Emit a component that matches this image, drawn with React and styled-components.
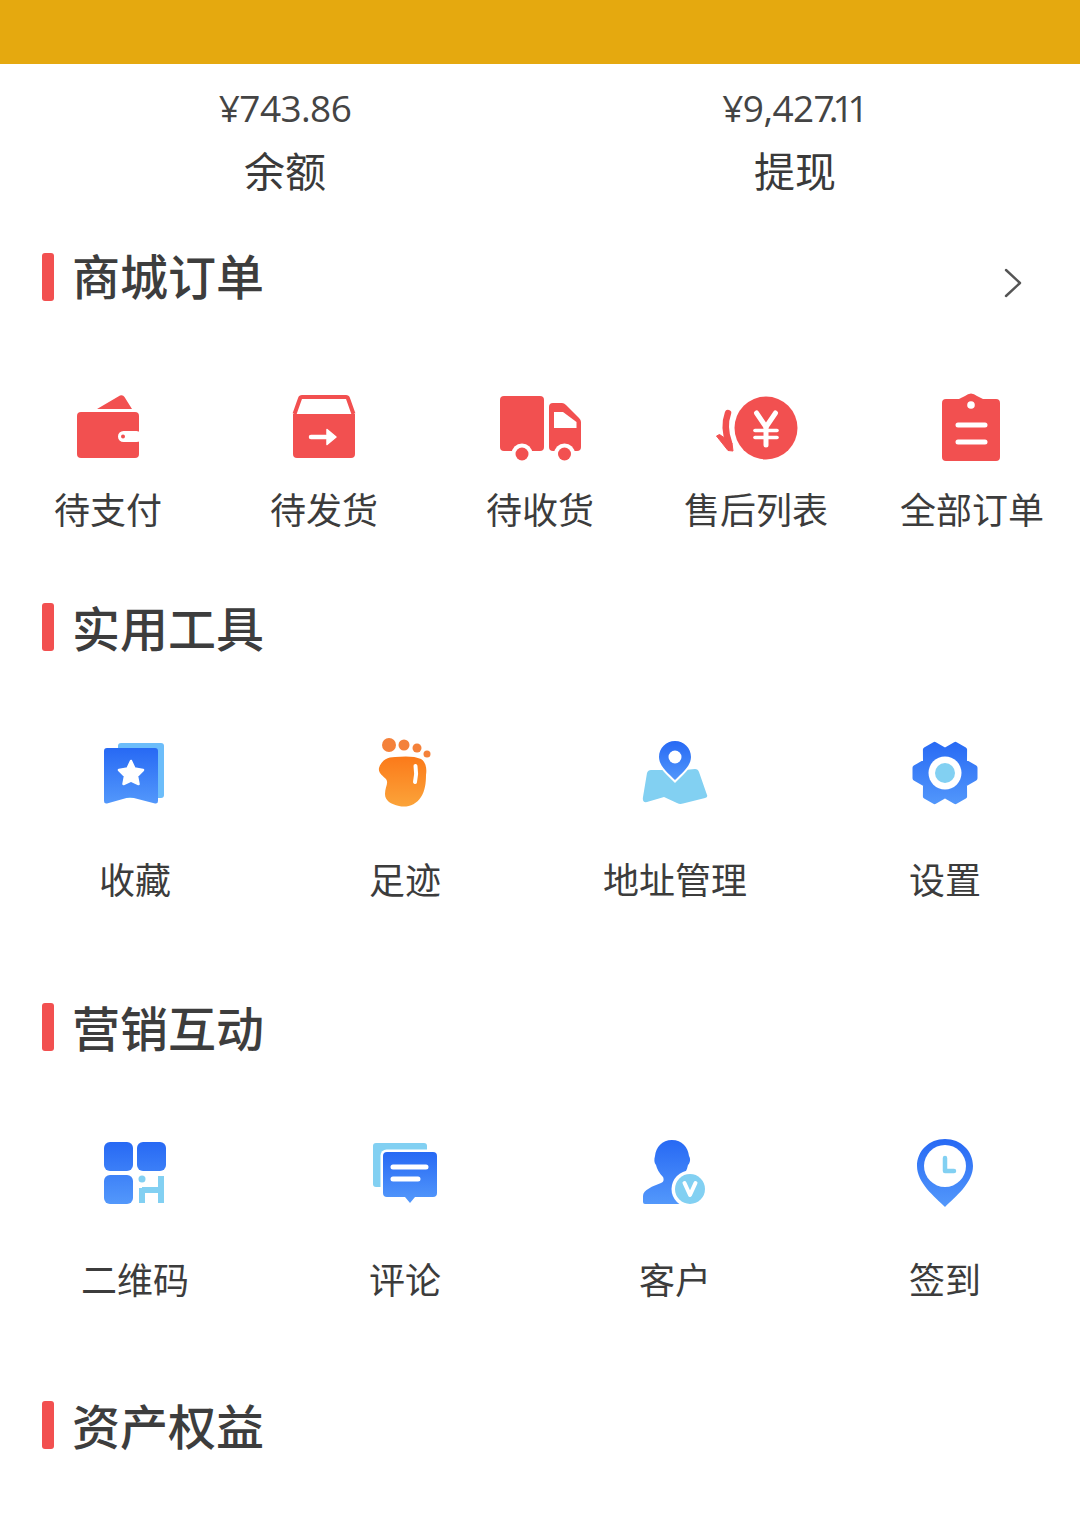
import React from 'react';
import styled, {createGlobalStyle} from 'styled-components';

const RED = '#f25050';
const SKY = '#82d0f2';

const GlobalStyle = createGlobalStyle`
  html, body {
    margin: 0;
    padding: 0;
    background: #fff;
  }
  body {
    font-family: "Noto Sans CJK SC", "Noto Sans", sans-serif;
    color: #333;
  }
`;

const Page = styled.div`
  width: 1080px;
  height: 1538px;
  overflow: hidden;
`;

const Band = styled.div`
  height: 64px;
  background: #e5a90f;
`;

const Stats = styled.div`
  display: grid;
  grid-template-columns: 510px 510px;
  padding: 20px 30px 0;
`;

const Stat = styled.div`
  display: flex;
  flex-direction: column;
  align-items: center;
`;

const StatValue = styled.div`
  font-family: "Open Sans", "Noto Sans CJK SC", sans-serif;
  font-size: 37px;
  font-weight: 400;
  line-height: 48px;
  letter-spacing: -0.6px;
  color: #444;
`;

const TightDigits = styled.span`
  letter-spacing: -6px;
  margin-right: 5px;
`;

const StatLabel = styled.div`
  margin-top: 9px;
  font-size: 41px;
  line-height: 56px;
  color: #3a3a3a;
`;

const SectionHead = styled.div`
  display: flex;
  align-items: center;
  justify-content: space-between;
  height: 48px;
  margin-top: ${p => p.$top}px;
  padding: 0 58px 0 42px;
`;

const SectionTitle = styled.div`
  display: flex;
  align-items: center;
  gap: 18px;
  font-size: 48px;
  font-weight: 500;
  line-height: 48px;
  color: #3d3d3d;

  &::before {
    content: '';
    width: 12px;
    height: 48px;
    border-radius: 3px;
    background: ${RED};
  }
`;

const TitleText = styled.span`
  padding-bottom: ${p => p.$lift}px;
`;

const Chevron = styled.svg`
  width: 18px;
  height: 30px;
  margin-top: 12px;
  fill: none;
  stroke: #555;
  stroke-width: 2.4;
  stroke-linecap: round;
  stroke-linejoin: round;
`;

const Grid = styled.div`
  display: grid;
  grid-template-columns: repeat(${p => p.$cols}, 1fr);
  margin-top: ${p => p.$top}px;
`;

const Item = styled.div`
  display: flex;
  flex-direction: column;
  align-items: center;
`;

const IconBox = styled.svg`
  display: block;
  width: 72px;
  height: 72px;
  overflow: visible;
  filter: blur(0.5px);
`;

const ItemLabel = styled.div`
  margin-top: ${p => p.$gap}px;
  font-size: 36px;
  line-height: 48px;
  color: #3c3c3c;
  white-space: nowrap;
`;

const Blue = ({id, y1 = 0, y2 = 72}) => (
  <defs>
    <linearGradient id={id} gradientUnits="userSpaceOnUse" x1="0" x2="0" y1={y1} y2={y2}>
      <stop offset="0" stopColor="#2769f4" />
      <stop offset="1" stopColor="#5398fb" />
    </linearGradient>
  </defs>
);

const Wallet = () => (
  <IconBox viewBox="0 0 72 72">
    <path d="M25 18 L48 4.5 Q51 3.5 52.5 6 L60 18 Z" fill={RED} />
    <rect x="5" y="21" width="62" height="46" rx="4" fill={RED} />
    <rect x="46" y="40" width="24" height="11" rx="5.5" fill="#fff" />
    <rect x="67" y="38" width="4" height="15" fill="#fff" />
    <circle cx="51" cy="45.5" r="2" fill={RED} />
  </IconBox>
);

const ShipBox = () => (
  <IconBox viewBox="0 0 72 72">
    <path d="M6.5 23 L12 7.5 Q12.5 6 14 6 L58 6 Q59.5 6 60 7.5 L65.5 23" fill="none" stroke={RED} strokeWidth="4" />
    <path d="M5 23 H67 V63 Q67 67 63 67 H9 Q5 67 5 63 Z" fill={RED} />
    <path d="M23 46 H38" stroke="#fff" strokeWidth="4.5" strokeLinecap="round" />
    <path d="M39 38.5 L48 46 L39 53.5 Z" fill="#fff" stroke="#fff" strokeWidth="1.5" strokeLinejoin="round" />
  </IconBox>
);

const Truck = () => (
  <IconBox viewBox="0 0 72 72">
    <rect x="-4" y="5" width="44" height="55" rx="4" fill={RED} />
    <path d="M45 16 Q45 12 49 12 H58 Q60 12 62 14 L75 27 Q77 29 77 31 V56 Q77 60 73 60 H49 Q45 60 45 56 Z" fill={RED} />
    <path d="M50 21 H59 L72.5 31 V37 H50 Z" fill="#fff" />
    <circle cx="18" cy="63" r="10.5" fill="#fff" />
    <circle cx="60.5" cy="63" r="10.5" fill="#fff" />
    <circle cx="18" cy="63" r="6.5" fill={RED} />
    <circle cx="60.5" cy="63" r="6.5" fill={RED} />
  </IconBox>
);

const Refund = () => (
  <IconBox viewBox="0 0 72 72">
    <circle cx="46" cy="37" r="31.5" fill={RED} />
    <g fill="none" stroke="#fff" strokeWidth="5" strokeLinecap="round" strokeLinejoin="round">
      <path d="M36.5 22 L46 36 L55.5 22" />
      <path d="M35 39.5 H57" strokeWidth="3.6" />
      <path d="M35 46.5 H57" strokeWidth="3.6" />
      <path d="M46 37 V54" />
    </g>
    <path d="M8 22 Q3 36 9 52" fill="none" stroke={RED} strokeWidth="6.5" strokeLinecap="round" />
    <path d="M-3.5 45 L-0.5 43.5 L12 52 L13 60 L8 59.5 Z" fill={RED} stroke={RED} strokeWidth="1" strokeLinejoin="round" />
  </IconBox>
);

const Clipboard = () => (
  <IconBox viewBox="0 0 72 72">
    <path d="M10 8 H23 Q27 6 29 5 Q35 0 41 5 Q43 6 47 8 H60 Q64 8 64 12 V66 Q64 70 60 70 H10 Q6 70 6 66 V12 Q6 8 10 8 Z" fill={RED} />
    <circle cx="35" cy="14" r="3.8" fill="#fff" />
    <path d="M22 34 H49 M22 51 H49" stroke="#fff" strokeWidth="5" strokeLinecap="round" />
  </IconBox>
);

const Favorite = () => (
  <IconBox viewBox="0 0 72 72">
    <Blue id="fav" y1={11} y2={67} />
    <rect x="19" y="6" width="46" height="55" rx="3" fill="#6cbdfa" />
    <path d="M8 11 H56 Q59 11 59 14 V64 Q59 67 56 66.5 L31 60 L8 66.5 Q5 67 5 64 V14 Q5 11 8 11 Z" fill="url(#fav)" />
    <path d="M32 24 L35.5 31.5 L44 33 L38 39 L39.5 47 L32 43.5 L24.5 47 L26 39 L20 33 L28.5 31.5 Z" fill="#fff" stroke="#fff" strokeWidth="2.5" strokeLinejoin="round" />
  </IconBox>
);

const Foot = () => (
  <IconBox viewBox="0 0 72 72">
    <defs>
      <linearGradient id="foot" gradientUnits="userSpaceOnUse" x1="0" x2="0" y1="20" y2="70">
        <stop offset="0" stopColor="#fb7a1a" />
        <stop offset="1" stopColor="#fba43a" />
      </linearGradient>
    </defs>
    <circle cx="20" cy="8" r="7" fill="#f4813a" />
    <circle cx="35" cy="8" r="5.5" fill="#f4813a" />
    <circle cx="48" cy="11" r="4.5" fill="#f4813a" />
    <circle cx="58" cy="17" r="3.5" fill="#f4813a" />
    <path d="M10 31 C12 24 18 20 26 20 C36 19 46 19 52 22 C57 25 58 32 57 38 C57 46 56 54 52 60 C47 68 38 71 30 69 C22 67 16 64 16 57 C16 50 20 46 17 42 C14 39 9 36 10 31 Z" fill="url(#foot)" />
    <path d="M46.5 29 Q48 37 46 45" fill="none" stroke="#fff" strokeWidth="4" strokeLinecap="round" />
  </IconBox>
);

const MapPin = () => (
  <IconBox viewBox="0 0 72 72">
    <Blue id="pin" y1={4} y2={44} />
    <path d="M8 36 Q9 33 12 33 L27 33 L36 40 L46 33 L56 32 Q59 32 60 35 L68 58 Q69 60 66 61 L44 66.5 Q41 67.5 38 66 L25 60 L8 65 Q3 66 4 60 Z" fill={SKY} />
    <path d="M36 46 C28 38 18 30 18 20 C18 10 26 2 36 2 C46 2 54 10 54 20 C54 30 44 38 36 46 Z" fill="#fff" />
    <path d="M36 43 C29 36 20 29 20 20 C20 11 27 4 36 4 C45 4 52 11 52 20 C52 29 43 36 36 43 Z" fill="url(#pin)" />
    <circle cx="36" cy="20" r="6.5" fill="#fff" />
  </IconBox>
);

// six lobes, rounded off by the stroke
const gearPoints = (() => {
  const pts = [];
  for (let i = 0; i < 6; i++) {
    const a = i * 60;
    [[a - 10, 30.5], [a + 10, 30.5], [a + 30, 22.5]].forEach(([deg, r]) => {
      const t = (deg * Math.PI) / 180;
      pts.push(`${(36 + r * Math.cos(t)).toFixed(1)},${(36 + r * Math.sin(t)).toFixed(1)}`);
    });
  }
  return pts.join(' ');
})();

const Gear = () => (
  <IconBox viewBox="0 0 72 72">
    <Blue id="gear" y1={3} y2={69} />
    <polygon points={gearPoints} fill="url(#gear)" stroke="url(#gear)" strokeWidth="5" strokeLinejoin="round" />
    <circle cx="36" cy="36" r="16.5" fill="#fff" />
    <circle cx="36" cy="36" r="10" fill={SKY} />
  </IconBox>
);

const QrCode = () => (
  <IconBox viewBox="0 0 72 72">
    <Blue id="qr" y1={6} y2={68} />
    <rect x="5" y="6" width="29" height="29" rx="6" fill="url(#qr)" />
    <rect x="38" y="6" width="29" height="29" rx="6" fill="url(#qr)" />
    <rect x="5" y="39" width="29" height="29" rx="6" fill="url(#qr)" />
    <circle cx="43" cy="43" r="3.5" fill={SKY} />
    <path d="M43 52 V67 M62 40 V67 M43 54 H62" fill="none" stroke={SKY} strokeWidth="6" />
  </IconBox>
);

const Comment = () => (
  <IconBox viewBox="0 0 72 72">
    <Blue id="cmt" y1={16} y2={66} />
    <rect x="4" y="7" width="54" height="44" rx="3" fill={SKY} />
    <rect x="11.5" y="13.5" width="59" height="50" rx="6" fill="#fff" />
    <path d="M18 16 H64 Q68 16 68 20 V57 Q68 61 64 61 H46 L41 67 L36 61 H18 Q14 61 14 57 V20 Q14 16 18 16 Z" fill="url(#cmt)" />
    <path d="M24 31 H57 M24 43 H49" stroke="#fff" strokeWidth="5" strokeLinecap="round" />
  </IconBox>
);

const Customer = () => (
  <IconBox viewBox="0 0 72 72">
    <Blue id="cust" y1={4} y2={68} />
    <path d="M33 4 C43 4 49 11 50 20 C52 23 51 27 49 29 C48 34 46 38 43 41 C44 46 52 48 60 52 L60 68 H6 Q4 68 4 66 L4 60 C4 54 14 50 22 47 C25 46 25 43 24 41 C20 37 18 33 17 29 C15 27 15 23 16 20 C17 11 23 4 33 4 Z" fill="url(#cust)" />
    <circle cx="51" cy="53" r="18.5" fill="#fff" />
    <circle cx="51" cy="53" r="15" fill={SKY} />
    <path d="M45.5 47 L51 59 L56.5 47" fill="none" stroke="#fff" strokeWidth="4" strokeLinecap="round" strokeLinejoin="round" />
  </IconBox>
);

const CheckIn = () => (
  <IconBox viewBox="0 0 72 72">
    <Blue id="chk" y1={3} y2={71} />
    <path d="M36 71 C26 61 8 47 8 30 C8 15 20 3 36 3 C52 3 64 15 64 30 C64 47 46 61 36 71 Z" fill="url(#chk)" />
    <circle cx="36" cy="30" r="21" fill="#fff" />
    <path d="M36 22 V35 H45" fill="none" stroke={SKY} strokeWidth="4.5" strokeLinecap="round" strokeLinejoin="round" />
  </IconBox>
);

const orders = [
  {label: '待支付', Icon: Wallet},
  {label: '待发货', Icon: ShipBox},
  {label: '待收货', Icon: Truck},
  {label: '售后列表', Icon: Refund},
  {label: '全部订单', Icon: Clipboard}
];

const tools = [
  {label: '收藏', Icon: Favorite},
  {label: '足迹', Icon: Foot},
  {label: '地址管理', Icon: MapPin},
  {label: '设置', Icon: Gear}
];

const marketing = [
  {label: '二维码', Icon: QrCode},
  {label: '评论', Icon: Comment},
  {label: '客户', Icon: Customer},
  {label: '签到', Icon: CheckIn}
];

const IconGrid = ({items, cols, top, gap}) => (
  <Grid $cols={cols} $top={top}>
    {items.map(({label, Icon}) => (
      <Item key={label}>
        <Icon />
        <ItemLabel $gap={gap}>{label}</ItemLabel>
      </Item>
    ))}
  </Grid>
);

export default function App() {
  return (
    <Page>
      <GlobalStyle />
      <Band />
      <Stats>
        <Stat>
          <StatValue>¥743.86</StatValue>
          <StatLabel>余额</StatLabel>
        </Stat>
        <Stat>
          <StatValue>
            ¥9,42<TightDigits>7.11</TightDigits>
          </StatValue>
          <StatLabel>提现</StatLabel>
        </Stat>
      </Stats>
      <SectionHead $top={56}>
        <SectionTitle>
          <TitleText $lift={7}>商城订单</TitleText>
        </SectionTitle>
        <Chevron viewBox="0 0 18 30">
          <path d="M2 2 L16 15 L2 28" />
        </Chevron>
      </SectionHead>
      <IconGrid items={orders} cols={5} top={90} gap={21} />
      <SectionHead $top={71}>
        <SectionTitle>
          <TitleText $lift={3}>实用工具</TitleText>
        </SectionTitle>
      </SectionHead>
      <IconGrid items={tools} cols={4} top={86} gap={45} />
      <SectionHead $top={101}>
        <SectionTitle>
          <TitleText $lift={3}>营销互动</TitleText>
        </SectionTitle>
      </SectionHead>
      <IconGrid items={marketing} cols={4} top={85} gap={46} />
      <SectionHead $top={99}>
        <SectionTitle>
          <TitleText $lift={3}>资产权益</TitleText>
        </SectionTitle>
      </SectionHead>
    </Page>
  );
}
